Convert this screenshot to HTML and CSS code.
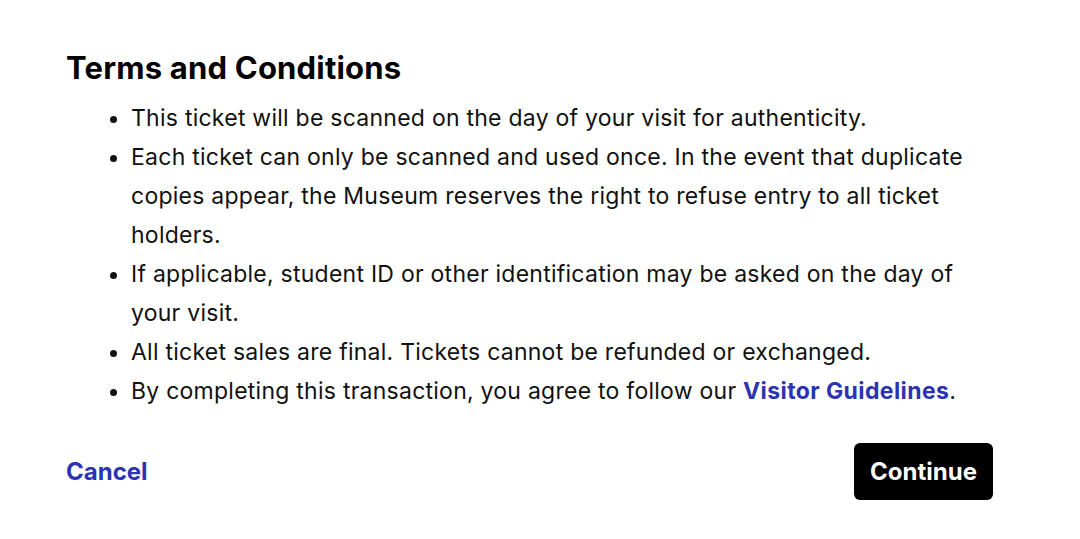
FILE: index.html
```html
<!DOCTYPE html>
<html lang="en">
<head>
<meta charset="utf-8">
<title>Terms and Conditions</title>
<link rel="stylesheet" href="styles.css">
</head>
<body>
<div class="dialog">
  <h2 class="title">Terms and Conditions</h2>
  <ul class="terms">
    <li>This ticket will be scanned on the day of your visit for authenticity.</li>
    <li>Each ticket can only be scanned and used once. In the event that duplicate copies appear, the Museum reserves the right to refuse entry to all ticket holders.</li>
    <li>If applicable, student ID or other identification may be asked on the day of your visit.</li>
    <li>All ticket sales are final. Tickets cannot be refunded or exchanged.</li>
    <li>By completing this transaction, you agree to follow our <a class="link" href="#">Visitor Guidelines</a>.</li>
  </ul>
  <div class="actions">
    <a class="cancel" href="#">Cancel</a>
    <button class="continue" type="button">Continue</button>
  </div>
</div>
</body>
</html>
```
FILE: styles.css
```css
html, body {
  margin: 0;
  padding: 0;
  background: #ffffff;
}
body {
  font-family: Inter, "Liberation Sans", Arial, sans-serif;
  color: #111111;
}
.dialog {
  width: 927px;
  padding: 50px 0 0 66px;
}
.title {
  margin: 0;
  font-size: 31px;
  line-height: 36px;
  font-weight: 700;
  letter-spacing: 0.2px;
  color: #000;
}
.terms {
  margin: 13px 0 0 0;
  padding: 0 0 0 65px;
  font-size: 23px;
  line-height: 39px;
  letter-spacing: 0.25px;
  list-style: disc;
}
.terms li {
  max-width: 852px;
}
.link {
  color: #2b33b3;
  font-weight: 700;
  letter-spacing: 0.4px;
  text-decoration: none;
}
.actions {
  display: flex;
  justify-content: space-between;
  align-items: center;
  margin-top: 32px;
}
.cancel {
  color: #2b33b3;
  font-weight: 700;
  font-size: 24px;
  text-decoration: none;
}
.continue {
  font-family: Inter, "Liberation Sans", Arial, sans-serif;
  background: #000;
  color: #fff;
  border: 0;
  border-radius: 6px;
  font-size: 24px;
  font-weight: 700;
  width: 139px;
  height: 57px;
  padding: 0;
}
```
